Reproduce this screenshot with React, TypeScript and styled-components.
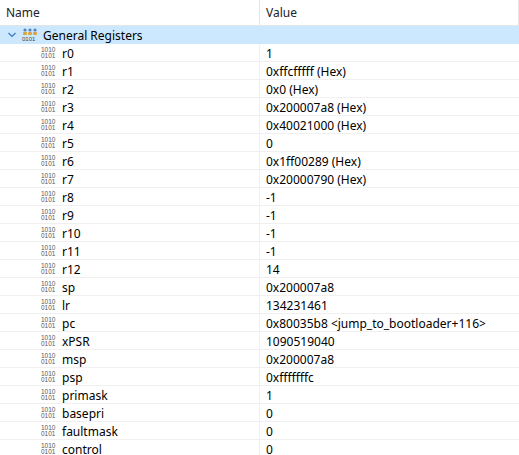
import React from "react";
import styled, { createGlobalStyle } from "styled-components";

const G = createGlobalStyle`
  body { margin: 0; background: #fff; font-family: "Noto Sans", "Open Sans", sans-serif; font-size: 12px; color: #000; }
`;

const Table = styled.div`
  width: 519px; height: 455px; overflow: hidden; background: #fff;
`;
const Header = styled.div`
  display: grid; grid-template-columns: 260px 1fr; height: 26px;
  border-bottom: 1px solid #e5e5e5; box-sizing: border-box;
`;
const HCell = styled.div`
  display: flex; align-items: center; padding-left: 6px;
  border-right: 1px solid #e5e5e5; font-size: 12px; color: #222;
`;
const Row = styled.div<{ $sel?: boolean }>`
  display: grid; grid-template-columns: 260px 1fr; height: 18px;
  background: ${p => (p.$sel ? "#cce8ff" : "#fff")};
  box-shadow: inset 0 -1px 0 ${p => (p.$sel ? "#cce8ff" : "#f0f0f0")};
  line-height: 17px;
`;
const NameCell = styled.div<{ $indent: number }>`
  display: flex; align-items: center; padding-left: ${p => p.$indent}px; gap: 4px;
  border-right: 1px solid ${p => (p.$indent < 10 ? "transparent" : "#f0f0f0")};
  white-space: nowrap;
`;
const ValCell = styled.div`
  padding-left: 6px; white-space: nowrap; display: flex; align-items: center;
`;
const Bin = styled.div`
  font-family: "Liberation Sans", sans-serif; font-size: 6.5px; line-height: 6px;
  color: #555; width: 17px; letter-spacing: 0px;
`;
const Chevron = styled.svg`width: 10px; height: 10px;`;

const regs: [string, string][] = [
  ["r0", "1"], ["r1", "0xffcfffff (Hex)"], ["r2", "0x0 (Hex)"], ["r3", "0x200007a8 (Hex)"],
  ["r4", "0x40021000 (Hex)"], ["r5", "0"], ["r6", "0x1ff00289 (Hex)"], ["r7", "0x20000790 (Hex)"],
  ["r8", "-1"], ["r9", "-1"], ["r10", "-1"], ["r11", "-1"], ["r12", "14"], ["sp", "0x200007a8"],
  ["lr", "134231461"], ["pc", "0x80035b8 <jump_to_bootloader+116>"], ["xPSR", "1090519040"],
  ["msp", "0x200007a8"], ["psp", "0xfffffffc"], ["primask", "1"], ["basepri", "0"],
  ["faultmask", "0"], ["control", "0"],
];

const BinIcon = () => (<Bin>1010<br />0101</Bin>);

const GroupIcon = () => (
  <svg width="18" height="14" viewBox="0 0 18 14">
    {[2, 7, 12].map(x => (
      <g key={x}>
        <circle cx={x + 2} cy={2} r={1.6} fill="#5b7fb8" />
        <rect x={x} y={4} width={4} height={3} rx={1} fill="#d9a441" />
      </g>
    ))}
    <text x="1" y="13" fontSize="6" fontFamily="Liberation Sans" fill="#444">0101</text>
  </svg>
);

export default function App() {
  return (
    <Table>
      <G />
      <Header><HCell>Name</HCell><HCell>Value</HCell></Header>
      <Row $sel>
        <NameCell $indent={7}>
          <Chevron viewBox="0 0 10 10"><path d="M1.5 3 L5 6.5 L8.5 3" stroke="#3b78c4" strokeWidth="1.2" fill="none" /></Chevron>
          <GroupIcon />
          <span>General Registers</span>
        </NameCell>
        <ValCell />
      </Row>
      {regs.map(([n, v]) => (
        <Row key={n}>
          <NameCell $indent={41}><BinIcon /><span>{n}</span></NameCell>
          <ValCell>{v}</ValCell>
        </Row>
      ))}
    </Table>
  );
}
